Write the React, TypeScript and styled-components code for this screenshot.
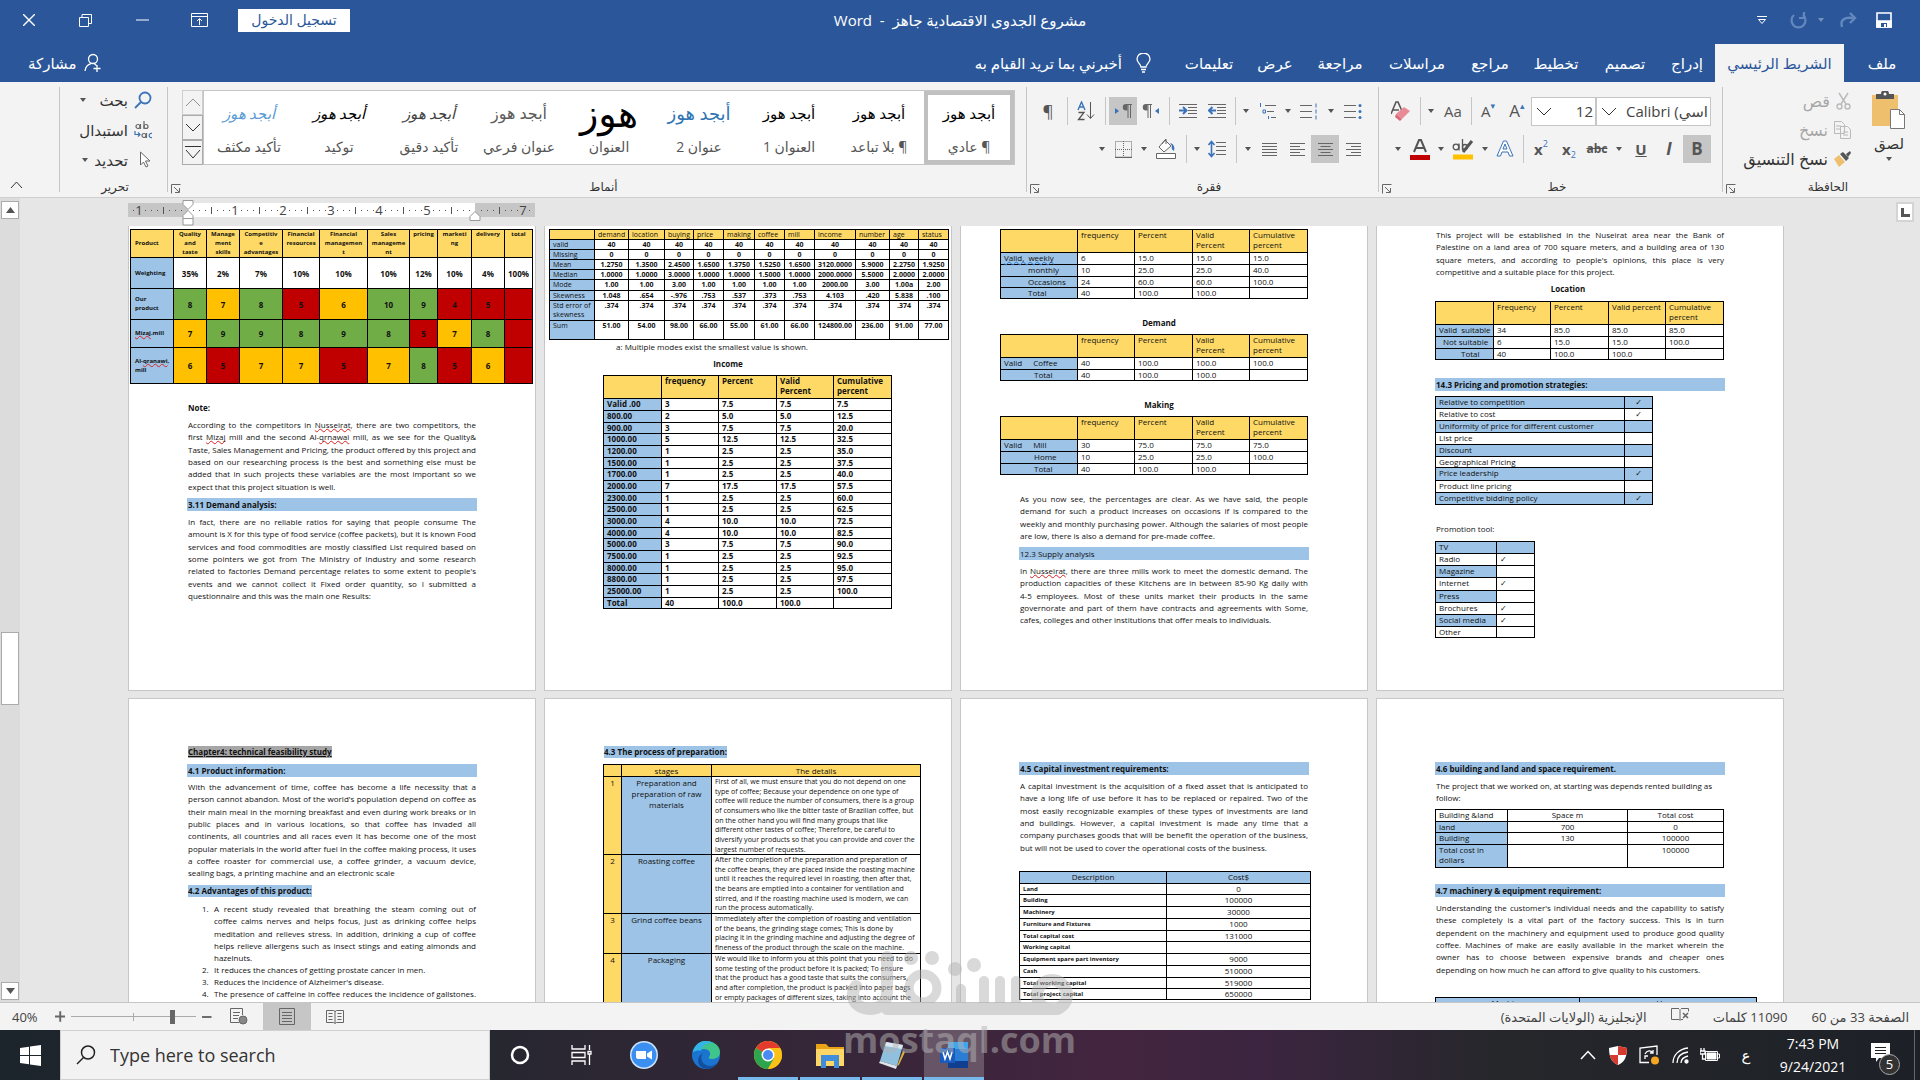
import React, { Fragment, ReactNode } from "react";
import styled, { createGlobalStyle, css } from "styled-components";

const ui = `"Open Sans", "DejaVu Sans", sans-serif`;

const c = {
  brand: "#2b579a",
  ribbon: "#f3f3f3",
  line: "#c6c6c6",
  desk: "#e6e6e6",
  blue: "#9dc3e6",
  gold: "#ffd966",
  amber: "#ffc000",
  green: "#70ad47",
  red: "#c00000",
  grey: "#666666",
  accent: "#3b73b9",
};

const Global = createGlobalStyle`
  * { box-sizing: border-box; }
  body { margin: 0; background: ${c.desk}; font-family: ${ui}; }
  button { border: 0; padding: 0; background: none; font: inherit; color: inherit; cursor: default; }
  a { color: inherit; text-decoration: none; }
`;

const Shell = styled.div`
  position: relative;
  display: flex;
  flex-direction: column;
  height: 100vh;
  overflow: hidden;
`;

/* ---------- title bar and tabs ---------- */

const TitleBar = styled.header`
  display: grid;
  grid-template-columns: 1fr auto 1fr;
  align-items: center;
  flex: none;
  height: 44px;
  padding-bottom: 4px;
  background: ${c.brand};
  color: #fff;
`;

const WindowTools = styled.div`
  display: flex;
  align-items: center;
`;

const WindowButton = styled.button`
  display: grid;
  place-items: center;
  width: 57px;
  height: 32px;
`;

const SignIn = styled.button`
  width: 112px;
  height: 23px;
  margin-left: 10px;
  background: #fff;
  color: ${c.brand};
  font-size: 14px;
  line-height: 20px;
`;

const Title = styled.h1`
  margin: 0;
  font-size: 15px;
  font-weight: 400;
`;

const QuickTools = styled.div`
  display: flex;
  direction: rtl;
  align-items: center;
  padding-right: 22px;
`;

const QuickButton = styled.button<{ $w: number; $dim?: boolean }>`
  display: grid;
  place-items: center;
  width: ${(p) => p.$w}px;
  height: 28px;
  opacity: ${(p) => (p.$dim ? 0.35 : 1)};
`;

const TabBar = styled.nav`
  display: flex;
  direction: rtl;
  flex: none;
  height: 38px;
  background: ${c.brand};
  color: #fff;
  font-size: 15px;
`;

const Tab = styled.a<{ $w: number; $on?: boolean }>`
  display: grid;
  place-items: center;
  width: ${(p) => p.$w}px;
  white-space: nowrap;
  ${(p) => p.$on && css`background: ${c.ribbon}; color: ${c.brand};`}
`;

const TabAction = styled.button<{ $end?: boolean }>`
  display: flex;
  align-items: center;
  gap: 14px;
  margin-right: 22px;
  white-space: nowrap;
  ${(p) => p.$end && css`margin-right: auto; margin-left: 28px; gap: 8px;`}
`;

/* ---------- ribbon ---------- */

const Ribbon = styled.section`
  display: flex;
  direction: rtl;
  flex: none;
  height: 116px;
  background: ${c.ribbon};
  border-bottom: 1px solid #cfcfcf;
  color: #333;
  font-size: 14px;
`;

const Group = styled.div<{ $w: number }>`
  position: relative;
  display: flex;
  flex-direction: column;
  width: ${(p) => p.$w}px;
  padding: 15px 11px 1px 4px;
  &::after {
    content: "";
    position: absolute;
    left: 0;
    top: 5px;
    bottom: 5px;
    border-left: 1px solid ${c.line};
  }
`;

const GroupFoot = styled.div`
  display: flex;
  align-items: center;
  height: 20px;
  margin-top: auto;
  margin-right: -11px;
  font-size: 12px;
`;

const GroupName = styled.span`
  flex: 1;
  text-align: center;
`;

const Launcher = styled.button`
  width: 10px;
  height: 10px;
`;

const ToolRow = styled.div`
  display: flex;
  align-items: center;
  height: 28px;
  margin-bottom: 10px;
  color: #555;
`;

const Tool = styled.button<{ $w?: number; $on?: boolean }>`
  display: grid;
  place-items: center;
  flex: none;
  direction: ltr;
  width: ${(p) => p.$w ?? 28}px;
  height: 28px;
  font-size: 17px;
  line-height: 20px;
  background: ${(p) => (p.$on ? "#c6c6c6" : "transparent")};
`;

const Bar = styled.span<{ $w?: number }>`
  flex: none;
  width: ${(p) => p.$w ?? 8}px;
  height: 28px;
  background: linear-gradient(${c.line}, ${c.line}) center / 1px 100% no-repeat;
`;

const Combo = styled.label<{ $w: number }>`
  display: flex;
  direction: ltr;
  align-items: center;
  flex: none;
  width: ${(p) => p.$w}px;
  height: 29px;
  padding-left: 4px;
  border: 1px solid ${c.line};
  background: #fff;
`;

const ComboSelect = styled.select`
  flex: 1;
  min-width: 0;
  border: 0;
  padding: 0 2px 0 0;
  appearance: none;
  background: none;
  color: #444;
  font: 15px ${ui};
  text-align: right;
  text-align-last: right;
`;

const Sub = styled.small<{ $up?: boolean }>`
  color: ${c.accent};
  font-size: 9px;
  line-height: 9px;
  vertical-align: ${(p) => (p.$up ? "8px" : "-3px")};
`;

const Glyph = styled.span<{ $size?: number; $b?: boolean; $i?: boolean; $deco?: string }>`
  font-size: ${(p) => p.$size ?? 17}px;
  font-weight: ${(p) => (p.$b ? 700 : 400)};
  font-style: ${(p) => (p.$i ? "italic" : "normal")};
  text-decoration: ${(p) => p.$deco ?? "none"};
`;

const Clipboard = styled.div`
  display: flex;
  align-items: flex-start;
  gap: 18px;
  height: 70px;
`;

const Paste = styled.button`
  display: flex;
  flex-direction: column;
  align-items: center;
  gap: 4px;
  width: 40px;
  margin-top: -6px;
  font-size: 15px;
  line-height: 20px;
`;

const ClipList = styled.div`
  display: flex;
  flex-direction: column;
  margin-top: -11px;
`;

const ClipButton = styled.button<{ $dim?: boolean }>`
  display: flex;
  align-items: center;
  gap: 6px;
  height: 29px;
  font-size: 16px;
  line-height: 16px;
  white-space: nowrap;
  opacity: ${(p) => (p.$dim ? 0.4 : 1)};
`;

const GalleryRow = styled.div`
  display: flex;
  margin-top: -7px;
`;

const Gallery = styled.div`
  display: flex;
  height: 75px;
  border: 1px solid ${c.line};
  background: #fff;
`;

const StyleTile = styled.button<{ $on?: boolean }>`
  display: flex;
  flex-direction: column;
  align-items: center;
  justify-content: space-between;
  width: 90px;
  padding: 7px 0 5px;
  border: 4px solid ${(p) => (p.$on ? "#c0c0c0" : "transparent")};
  white-space: nowrap;
  color: #555;
  line-height: 16px;
`;

const Sample = styled.span<{ $color: string; $size: number; $i?: boolean }>`
  height: 24px;
  line-height: 24px;
  color: ${(p) => p.$color};
  font-family: "Liberation Serif", "DejaVu Sans", serif;
  font-size: ${(p) => p.$size}px;
  font-style: ${(p) => (p.$i ? "italic" : "normal")};
`;

const GalleryNav = styled.div`
  display: flex;
  flex-direction: column;
  width: 21px;
  height: 75px;
`;

const NavStep = styled.button`
  display: grid;
  place-items: center;
  flex: 1;
  border: 1px solid #ababab;
  &:first-child { opacity: 0.5; }
`;

const EditButton = styled.button`
  display: flex;
  align-items: center;
  flex: none;
  gap: 6px;
  height: 30px;
  font-size: 15px;
  line-height: 16px;
`;

const EditList = styled.div`
  display: flex;
  flex-direction: column;
  height: 80px;
  margin: -12px 4px 0;
`;

const Collapse = styled.button`
  align-self: flex-end;
  margin: 0 auto 4px 10px;
`;

/* ---------- workspace ---------- */

const Workspace = styled.main`
  display: flex;
  flex: 1;
  min-height: 0;
  overflow: hidden;
`;

const ScrollBar = styled.div`
  display: flex;
  flex-direction: column;
  flex: none;
  width: 20px;
  padding: 3px 1px 2px;
  background: #dcdcdc;
`;

const ScrollButton = styled.button`
  display: grid;
  place-items: center;
  width: 18px;
  height: 18px;
  border: 1px solid #ababab;
  background: #fff;
`;

const ScrollTrack = styled.div`
  flex: 1;
  padding-top: 413px;
`;

const ScrollThumb = styled.div`
  height: 73px;
  border: 1px solid #ababab;
  background: #fff;
`;

const Desk = styled.div`
  flex: 1;
  display: flex;
  flex-direction: column;
  align-items: center;
`;

const RulerRow = styled.div`
  display: flex;
  flex: none;
  width: 1656px;
  height: 28px;
  padding-top: 2px;
`;

const Sheets = styled.div`
  display: grid;
  grid-template-columns: repeat(4, 408px);
  gap: 7px 8px;
`;

const Page = styled.article<{ $first?: boolean }>`
  height: 465px;
  overflow: hidden;
  border: 1px solid ${c.line};
  ${(p) => p.$first && css`border-top: 0;`}
  background: #fff;
  color: #111;
  font: 8px/12px ${ui};
`;

const TabStop = styled.aside`
  flex: none;
  width: 28px;
  padding: 4px 0 0 4px;
`;

const TabBox = styled.button`
  display: grid;
  place-items: center;
  width: 18px;
  height: 20px;
  border: 2px solid #d4d4d4;
  background: #fff;
`;

const Para = styled.p<{ $top: number }>`
  width: 288px;
  margin: ${(p) => p.$top}px 0 0 59px;
`;

const TextLine = styled.span<{ $fill: boolean }>`
  display: block;
  height: 12px;
  line-height: 12px;
  white-space: nowrap;
  text-align: left;
  text-align-last: ${(p) => (p.$fill ? "justify" : "left")};
  &:nth-child(3n) { height: 13px; line-height: 13px; }
`;

const Band = styled.h3<{ $top: number; $light?: boolean }>`
  width: 290px;
  height: 13px;
  margin: ${(p) => p.$top}px 0 0 58px;
  padding-left: 1px;
  background: ${c.blue};
  font-size: 8px;
  line-height: 13px;
  font-weight: ${(p) => (p.$light ? 400 : 700)};
`;

const Tagged = styled.h3<{ $top: number; $bg: string; $under?: boolean }>`
  width: fit-content;
  margin: ${(p) => p.$top}px 0 0 59px;
  background: ${(p) => p.$bg};
  font-size: 8px;
  line-height: 12px;
  text-decoration: ${(p) => (p.$under ? "underline" : "none")};
`;

const Caption = styled.h4<{ $top: number; $left: number; $plain?: boolean }>`
  width: 288px;
  margin: ${(p) => p.$top}px 0 0 ${(p) => p.$left}px;
  font-size: 8px;
  line-height: 12px;
  font-weight: ${(p) => (p.$plain ? 400 : 700)};
  text-align: ${(p) => (p.$plain ? "left" : "center")};
`;

const Points = styled.ol`
  width: 262px;
  margin: 6px 0 0 85px;
  padding: 0;
  list-style: none;
`;

const Point = styled.li`
  display: grid;
  grid-template-columns: 12px 262px;
  margin-left: -12px;
`;

const Spell = styled.span<{ $c?: string }>`
  text-decoration: underline wavy ${(p) => p.$c ?? "#d22"} 1px;
  text-underline-offset: 0;
  text-decoration-skip-ink: none;
`;

const Grid = styled.table<{ $top: number; $left: number; $w: number; $size: number; $lh: number; $bold?: boolean }>`
  width: ${(p) => p.$w}px;
  margin: ${(p) => p.$top}px 0 0 ${(p) => p.$left}px;
  border-collapse: collapse;
  table-layout: fixed;
  font-size: ${(p) => p.$size}px;
  line-height: ${(p) => p.$lh}px;
  font-weight: ${(p) => (p.$bold ? 700 : 400)};
  white-space: nowrap;
`;

const Row = styled.tr<{ $h: number }>`
  height: ${(p) => p.$h}px;
`;

const cell = css<{ $bg?: string; $mid?: boolean; $va?: string; $small?: boolean; $b?: boolean; $pad?: number }>`
  padding: 0 ${(p) => p.$pad ?? 3}px;
  border: 1px solid #000;
  background: ${(p) => p.$bg ?? "#fff"};
  text-align: ${(p) => (p.$mid ? "center" : "left")};
  vertical-align: ${(p) => p.$va ?? "top"};
  ${(p) => p.$small && css`font-size: 6px;`}
  ${(p) => p.$b && css`font-weight: 700;`}
`;
const Cell = styled.td`${cell}`;
const HeadCell = styled.th`
  ${cell}
  font-weight: inherit;
  ${(p) => p.$b && css`font-weight: 700;`}
`;

const Shift = styled.span<{ $x: number }>`
  padding-left: ${(p) => p.$x}px;
`;

const Detail = styled.div`
  font-size: 7px;
`;

const DetailLine = styled.span`
  display: block;
  height: 10px;
  line-height: 10px;
  &:nth-child(3n + 2) { height: 9px; line-height: 9px; }
`;

type Look = { bg?: string; mid?: boolean; va?: string; small?: boolean; b?: boolean; pad?: number };

function Sheet(props: {
  top: number; left: number; cols: number[]; heights: number[]; rows: ReactNode[][];
  size?: number; lh?: number; bold?: boolean; look?: (r: number, k: number) => Look; head?: boolean;
}) {
  const { top, left, cols, heights, rows, size = 8, lh = 10, bold, look, head = true } = props;
  const draw = (row: ReactNode[], r: number) => (
    <Row key={r} $h={heights[r]}>
      {row.map((value, k) => {
        const l = look ? look(r, k) : {};
        const Part = head && r === 0 ? HeadCell : Cell;
        return (
          <Part key={k} $bg={l.bg} $mid={l.mid} $va={l.va} $small={l.small} $b={l.b} $pad={l.pad}>{value}</Part>
        );
      })}
    </Row>
  );
  return (
    <Grid $top={top} $left={left} $w={cols.reduce((a, b) => a + b, 1)} $size={size} $lh={lh} $bold={bold}>
      <colgroup>{cols.map((w, i) => <col key={i} width={w} />)}</colgroup>
      {head && <thead>{draw(rows[0], 0)}</thead>}
      <tbody>{rows.slice(head ? 1 : 0).map((row, i) => draw(row, i + (head ? 1 : 0)))}</tbody>
    </Grid>
  );
}

function Lines({ top, lines }: { top: number; lines: ReactNode[] }) {
  return (
    <Para $top={top}>
      {lines.map((line, i) => <TextLine key={i} $fill={i < lines.length - 1}>{line} </TextLine>)}
    </Para>
  );
}

const surveyLook = (r: number, k: number): Look => ({ bg: r === 0 ? c.gold : k === 0 ? c.blue : undefined });

/* ---------- status bar ---------- */

const StatusBar = styled.footer`
  display: flex;
  align-items: center;
  flex: none;
  height: 28px;
  padding: 0 11px 0 12px;
  border-top: 1px solid ${c.line};
  background: ${c.ribbon};
  color: #444;
  font-size: 13px;
`;

const Zoom = styled.label`
  display: flex;
  align-items: center;
  gap: 4px;
  width: 200px;
  margin-right: 3px;
`;

const ZoomText = styled.span`
  width: 41px;
`;

const Range = styled.input`
  width: 125px;
  height: 16px;
  margin: 0 2px;
  direction: rtl;
  appearance: none;
  background:
    linear-gradient(#aaa, #aaa) center / 1px 8px no-repeat,
    linear-gradient(#aaa, #aaa) center / 100% 1px no-repeat;
  &::-webkit-slider-thumb {
    appearance: none;
    width: 5px;
    height: 14px;
    background: #666;
  }
`;

const ViewButton = styled.button<{ $on?: boolean }>`
  display: grid;
  place-items: center;
  width: 48px;
  height: 27px;
  background: ${(p) => (p.$on ? "#c6c6c6" : "transparent")};
`;

const StatusText = styled.span`
  direction: rtl;
  margin-left: 24px;
  white-space: nowrap;
`;

const StatusEnd = styled.div`
  display: flex;
  align-items: center;
  margin-left: auto;
`;

/* ---------- taskbar ---------- */

const TaskBar = styled.footer`
  display: flex;
  flex: none;
  height: 50px;
  background: linear-gradient(90deg, #1c242c 0, #25272f 24%, #38263a 45%, #43253f 58%, #3b2540 66%, #26272b 78%, #1d2127 100%);
  color: #fff;
`;

const Start = styled.button`
  display: grid;
  place-items: center;
  width: 60px;
`;

const SearchBox = styled.label`
  display: flex;
  align-items: center;
  gap: 14px;
  width: 430px;
  padding-left: 15px;
  border: 1px solid #d0d0d0;
  background: #f2f2f2;
`;

const SearchInput = styled.input`
  flex: 1;
  min-width: 0;
  border: 0;
  padding: 0;
  background: none;
  font: 18px ${ui};
  &::placeholder { color: #333; opacity: 1; }
`;

const Apps = styled.div`
  display: flex;
`;

const AppButton = styled.button<{ $open?: boolean; $on?: boolean }>`
  display: grid;
  place-items: center;
  width: 60px;
  margin-right: 2px;
  background: ${(p) => (p.$on ? "rgba(255,255,255,.22)" : "transparent")};
  ${(p) => p.$open && css`box-shadow: inset 0 -3px #76b9ed;`}
`;

const Tray = styled.div`
  display: flex;
  align-items: center;
  margin-left: auto;
`;

const TrayButton = styled.button<{ $w?: number }>`
  display: grid;
  place-items: center;
  width: ${(p) => p.$w ?? 30}px;
  height: 50px;
  font-size: 15px;
`;

const Clock = styled.time`
  width: 92px;
  text-align: center;
  font-size: 14px;
  line-height: 23px;
`;

const Notice = styled.button`
  position: relative;
  width: 56px;
  height: 50px;
  padding-right: 12px;
  margin-right: 5px;
  border-right: 1px solid #666;
`;

const Count = styled.span`
  position: absolute;
  left: 20px;
  top: 24px;
  width: 21px;
  height: 21px;
  border: 1px solid #aaa;
  border-radius: 50%;
  background: #333;
  font-size: 13px;
  line-height: 19px;
`;

const Watermark = styled.div`
  position: absolute;
  left: 843px;
  bottom: 20px;
  width: 236px;
  opacity: 0.5;
  color: #b4b4b4;
  pointer-events: none;
`;

const WatermarkName = styled.div`
  font: 700 36px/40px "Open Sans", sans-serif;
`;

/* ---------- icons ---------- */

function Icon({ w = 18, h = 18, box, children, stroke = "#666", sw = 1 }: {
  w?: number; h?: number; box?: string; children: ReactNode; stroke?: string; sw?: number;
}) {
  return (
    <svg width={w} height={h} viewBox={box ?? `0 0 ${w} ${h}`} fill="none" stroke={stroke} strokeWidth={sw} aria-hidden="true">
      {children}
    </svg>
  );
}

const Caret = ({ w = 14 }: { w?: number }) => (
  <Tool $w={w} aria-label="▾">
    <Icon w={6} h={4}><path d="M0 0h6L3 4z" fill="#555" stroke="none" /></Icon>
  </Tool>
);

const Chevron = ({ color = "#333", up }: { color?: string; up?: boolean }) => (
  <Icon w={16} h={9} stroke={color}><path d={up ? "M1 8l7-7 7 7" : "M1 1l7 7 7-7"} /></Icon>
);

const Launch = () => (
  <Launcher aria-label="↘">
    <Icon w={10} h={10}><path d="M9.500 .5h-9v9M3 3l5 5M8.500 4v4.500H4" /></Icon>
  </Launcher>
);

const textRows = (widths: number[], side: "l" | "c" | "r", w = 15) =>
  widths.map((n, i) => {
    const x = side === "l" ? 0 : side === "r" ? w - n : (w - n) / 2;
    return <path key={i} d={`M${x} ${i * 3 + 1.5}h${n}`} />;
  });

const AlignIcon = ({ side }: { side: "l" | "c" | "r" | "j" }) => (
  <Icon w={15} h={14}>
    {side === "j" ? textRows([15, 15, 15, 15, 15], "l") : textRows([15, 10, 15, 10, 15], side)}
  </Icon>
);

const ListIcon = ({ kind }: { kind: "dot" | "num" | "multi" }) => (
  <Icon w={18} h={18}>
    {kind !== "multi" && <path d="M0 3.500h12M0 9.500h12M0 15.500h12" />}
    {kind === "dot" && [3.5, 9.5, 15.5].map((y) => <circle key={y} cx={16} cy={y} r={1.5} fill={c.accent} stroke="none" />)}
    {kind === "num" && [3.5, 9.5, 15.5].map((y) => <path key={y} d={`M16 ${y - 2}v4`} stroke={c.accent} />)}
    {kind === "multi" && (
      <>
        <path d="M7 3.500h11M9 9.500h7M13 15.500h5" />
        <path d="M2.500 1v4M5 8h2.500v3H5zM10.500 14v3" stroke={c.accent} />
      </>
    )}
  </Icon>
);

const IndentIcon = ({ flip }: { flip?: boolean }) => (
  <Icon w={18} h={16}>
    <path d="M0 1.500h18M9 4.500h9M9 7.500h9M9 10.500h9M0 14.500h18" />
    <path d={flip ? "M0 7.500h7M4 4l3.500 3.500L4 11" : "M8 7.500H1M4.500 4L1 7.500 4.500 11"} stroke={c.accent} strokeWidth={2} />
  </Icon>
);

const Pilcrow = ({ arrow }: { arrow: "l" | "r" }) => (
  <Icon w={18} h={16}>
    <g transform={arrow === "l" ? "translate(0 0)" : "translate(8 0)"}>
      <path d="M10 1.500H4.500M6 1.500V15M8.500 1.500V15" />
      <path d="M5.500 1H4a3.200 3.200 0 000 6.500h1.500z" fill="#666" stroke="none" />
    </g>
    <path d={arrow === "l" ? "M17 5v6l-4-3z" : "M1 5v6l4-3z"} fill={c.accent} stroke="none" />
  </Icon>
);

const PersonIcon = () => (
  <Icon w={18} h={20} stroke="#fff" sw={1.3}>
    <circle cx="9" cy="6" r="4.500" /><path d="M1 18c.5-4 3-6.500 6-7.300M10.500 11l2 1.500M13 12v7M9.500 15.500h7" />
  </Icon>
);

const DocIcon = () => (
  <Icon w={16} h={17}><path d="M.5 .5h15v16H.5zM3 4.500h10M3 7.500h10M3 10.500h10M3 13.500h10" /></Icon>
);

function Ruler() {
  const marks: ReactNode[] = [];
  for (let i = -9; i <= 57; i++) {
    const x = 60 + i * 6;
    if (x > 405) break;
    if (i % 8 === 0) {
      if (i > 0 && i !== 48) marks.push(<text key={i} x={x} y="12" textAnchor="middle" fontSize="13">{i / 8}</text>);
      if (i === -8) marks.push(<text key={i} x={x} y="12" textAnchor="middle" fontSize="13">1</text>);
    } else if (i % 4 === 0) marks.push(<path key={i} d={`M${x}.5 4v7`} stroke="#555" />);
    else marks.push(<path key={i} d={`M${x}.5 7v1`} stroke="#555" />);
  }
  return (
    <svg width="410" height="26" viewBox="1 -3 410 26" fontFamily='"Open Sans", sans-serif' fill="#444" aria-hidden="true">
      <rect width="408" height="14" fill="#c6c6c6" />
      <rect x="61" width="287" height="14" fill="#fff" />
      {marks}
      <g fill="#fff" stroke="#999">
        <path d="M56 -2.500h10v4l-5 5-5-5zM61 7.500l5 5v9.500h-10v-9.500zM56 15.500h10" />
        <path d="M348 8.500l5 5v4h-10v-4z" />
      </g>
    </svg>
  );
}

/* ---------- content ---------- */

const tabs: [string, number][] = [
  ["إدراج", 56], ["تصميم", 68], ["تخطيط", 70], ["مراجع", 62], ["مراسلات", 84], ["مراجعة", 70], ["عرض", 60], ["تعليمات", 72],
];

const stylesList: { name: string; color: string; size?: number; i?: boolean; text?: string }[] = [
  { name: "¶ عادي", color: "#000" },
  { name: "¶ بلا تباعد", color: "#000" },
  { name: "العنوان 1", color: "#000" },
  { name: "عنوان 2", color: "#2e74b5", size: 18 },
  { name: "العنوان", color: "#000", size: 38, text: "هوز" },
  { name: "عنوان فرعي", color: "#5a5a5a", size: 16 },
  { name: "تأكيد دقيق", color: "#404040", i: true },
  { name: "توكيد", color: "#000", i: true },
  { name: "تأكيد مكثف", color: "#5b9bd5", i: true },
];

const broken = (lines: string[]) => lines.map((l, i) => <Fragment key={i}>{i > 0 && <br />}{l}</Fragment>);

const G = c.green, A = c.amber, R = c.red;
const scores: [ReactNode, string[], string[]][] = [
  [broken(["Our", "product"]), ["8", "7", "8", "5", "6", "10", "9", "4", "5", ""], [G, A, G, R, A, G, G, R, R, R]],
  [<Fragment key="m"><Spell>Mizaj</Spell>.mill</Fragment>, ["7", "9", "9", "8", "9", "8", "5", "7", "8", ""], [A, G, G, G, G, G, R, A, G, R]],
  [<Fragment key="a">Al-<Spell>qranawi</Spell>,<br />mill</Fragment>, ["6", "5", "7", "7", "5", "7", "8", "5", "6", ""], [A, R, A, A, R, A, G, R, A, R]],
];

const stats: ReactNode[][] = [
  ["", "demand", "location", "buying", "price", "making", "coffee", "mill", "income", "number", "age", "status"],
  ["valid", ...Array(11).fill("40")],
  ["Missing", ...Array(11).fill("0")],
  ["Mean", "1.2750", "1.3500", "2.4500", "1.6500", "1.3750", "1.5250", "1.6500", "3120.0000", "5.9000", "2.2750", "1.9250"],
  ["Median", "1.0000", "1.0000", "3.0000", "1.0000", "1.0000", "1.5000", "1.0000", "2000.0000", "5.5000", "2.0000", "2.0000"],
  ["Mode", "1.00", "1.00", "3.00", "1.00", "1.00", "1.00", "1.00", "2000.00", "3.00", "1.00a", "2.00"],
  ["Skewness", "1.048", ".654", "-.976", ".753", ".537", ".373", ".753", "4.103", ".420", "5.838", ".100"],
  [broken(["Std error of", "skewness"]), ...Array(11).fill(".374")],
  ["Sum", "51.00", "54.00", "98.00", "66.00", "55.00", "61.00", "66.00", "124800.00", "236.00", "91.00", "77.00"],
];

const income: ReactNode[][] = [
  ["", "frequency", "Percent", broken(["Valid", "Percent"]), broken(["Cumulative", "percent"])],
  ["Valid .00", "3", "7.5", "7.5", "7.5"],
  ["800.00", "2", "5.0", "5.0", "12.5"],
  ["900.00", "3", "7.5", "7.5", "20.0"],
  ["1000.00", "5", "12.5", "12.5", "32.5"],
  ["1200.00", "1", "2.5", "2.5", "35.0"],
  ["1500.00", "1", "2.5", "2.5", "37.5"],
  ["1700.00", "1", "2.5", "2.5", "40.0"],
  ["2000.00", "7", "17.5", "17.5", "57.5"],
  ["2300.00", "1", "2.5", "2.5", "60.0"],
  ["2500.00", "1", "2.5", "2.5", "62.5"],
  ["3000.00", "4", "10.0", "10.0", "72.5"],
  ["4000.00", "4", "10.0", "10.0", "82.5"],
  ["5000.00", "3", "7.5", "7.5", "90.0"],
  ["7500.00", "1", "2.5", "2.5", "92.5"],
  ["8000.00", "1", "2.5", "2.5", "95.0"],
  ["8800.00", "1", "2.5", "2.5", "97.5"],
  ["25000.00", "1", "2.5", "2.5", "100.0"],
  ["Total", "40", "100.0", "100.0", ""],
];
const incomeHeights = income.map((_, i) => (i === 0 ? 23 : i % 3 === 0 ? 11 : 12));

const surveyHead: ReactNode[] = ["", "frequency", "Percent", broken(["Valid", "Percent"]), broken(["Cumulative", "percent"])];
const surveyCols = [77, 57, 58, 57, 58];
const V = ({ children }: { children: ReactNode }) => <>Valid<Shift $x={11}>{children}</Shift></>;

const pricing: [string, string][] = [
  ["Relative to competition", "✓"], ["Relative to cost", "✓"], ["Uniformity of price for different customer", ""],
  ["List price", ""], ["Discount", ""], ["Geographical Pricing", ""], ["Price leadership", "✓"],
  ["Product line pricing", ""], ["Competitive bidding policy", "✓"],
];
const promo: [string, string][] = [
  ["TV", ""], ["Radio", "✓"], ["Magazine", ""], ["Internet", "✓"], ["Press", ""], ["Brochures", "✓"], ["Social media", "✓"], ["Other", ""],
];
const promoBlue = [0, 2, 4, 6];

const detail = (lines: string[]) => (
  <Detail>{lines.map((l) => <DetailLine key={l}>{l}</DetailLine>)}</Detail>
);

const stages: ReactNode[][] = [
  ["", "stages", "The details"],
  ["1", broken(["Preparation and", "preparation of raw", "materials"]), detail([
    "First of all, we must ensure that you do not depend on one", "type of coffee; Because your dependence on one type of",
    "coffee will reduce the number of consumers, there is a group", "of consumers who like the bitter taste of Brazilian coffee, but",
    "on the other hand you will find many groups that like", "different other tastes of coffee; Therefore, be careful to",
    "diversify your products so that you can provide and cover the", "largest number of requests."])],
  ["2", "Roasting coffee", detail([
    "After the completion of the preparation and preparation of", "the coffee beans, they are placed inside the roasting machine",
    "until it reaches the required level in roasting, then after that,", "the beans are emptied into a container for ventilation and",
    "stirred, and if the roasting machine used is modern, we can", "run the process automatically."])],
  ["3", "Grind coffee beans", detail([
    "Immediately after the completion of roasting and ventilation", "of the beans, the grinding stage comes; This is done by",
    "placing it in the grinding machine and adjusting the degree of", "fineness of the product through the scale on the machine."])],
  ["4", "Packaging", detail([
    "We would like to inform you at this point that you need to do", "some testing of the product before it is packed; To ensure",
    "that the product has a good taste that suits the consumers,", "and after completion, the product is packed into paper bags",
    "or empty packages of different sizes, taking into account the"])],
];

const costs = [
  ["Description", "Cost$"], ["Land", "0"], ["Building", "100000"], ["Machinery", "30000"], ["Furniture and Fixtures", "1000"],
  ["Total capital cost", "131000"], ["Working capital", ""], ["Equipment spare part inventory", "9000"], ["Cash", "510000"],
  ["Total working capital", "519000"], ["Total project capital", "650000"],
];

const Pages = () => (
  <Sheets>
    <Page $first>
      <Sheet top={3} left={1} size={8} lh={9} bold
        cols={[43, 33, 33, 43, 37, 48, 42, 28, 34, 33, 28]} heights={[28, 31, 31, 28, 36]}
        rows={[
          ["Product", broken(["Quality", "and", "taste"]), broken(["Manage", "ment", "skills"]), broken(["Competitiv", "e", "advantages"]),
            broken(["Financial", "resources"]), broken(["Financial", "managemen", "t"]), broken(["Sales", "manageme", "nt"]), "pricing",
            broken(["marketi", "ng"]), "delivery", "total"],
          ["Weighting", "35%", "2%", "7%", "10%", "10%", "10%", "12%", "10%", "4%", "100%"],
          ...scores.map(([n, v]) => [n, ...v]),
        ]}
        look={(r, k) => ({
          bg: r === 0 ? c.gold : k === 0 ? c.blue : r > 1 ? scores[r - 2][2][k - 1] : undefined,
          small: r === 0 || k === 0, mid: k > 0, va: r === 0 && k > 0 ? "top" : "middle", pad: k === 0 ? 4 : 0,
        })} />
      <Caption $top={18} $left={59} $plain><b>Note:</b></Caption>
      <Lines top={5} lines={[
        <>According to the competitors in <Spell>Nusseirat</Spell>, there are two competitors, the</>,
        <>first <Spell>Mizaj</Spell> mill and the second Al-<Spell>qrnawai</Spell> mill, as we see for the Quality&amp;</>,
        "Taste, Sales Management and Pricing, the product offered by this project and",
        "based on our researching process is the best and something else must be",
        "added that in such projects these variables are the most important so we",
        "expect that this project situation is well.",
      ]} />
      <Band $top={5}>3.11 Demand analysis:</Band>
      <Lines top={5} lines={[
        "In fact, there are no reliable ratios for saying that people consume The",
        "amount is X for this type of food service (coffee packets), but it is known Food",
        "services and food commodities are mostly classified List required based on",
        "some pointers we got from The Ministry of Industry and some research",
        "related to factories Demand percentage relates to some extent to people's",
        "events and we cannot collect it Fixed order quantity, so I submitted a",
        "questionnaire and this was the main one Results:",
      ]} />
    </Page>

    <Page $first>
      <Sheet top={3} left={4} size={7} lh={9}
        cols={[45, 34, 36, 29, 30, 31, 30, 30, 41, 34, 29, 30]} heights={[10, 10, 10, 10, 10, 11, 10, 20, 19]} rows={stats}
        look={(r, k) => ({
          bg: r === 0 ? c.gold : k === 0 ? c.blue : undefined, b: r > 0 && k > 0, mid: r > 0 && k > 0, pad: k > 0 && r > 0 ? 0 : 3,
        })} />
      <Caption $top={1} $left={71} $plain>a: Multiple modes exist the smallest value is shown.</Caption>
      <Caption $top={5} $left={39}>Income</Caption>
      <Sheet top={5} left={58} bold cols={[58, 57, 58, 57, 58]} heights={incomeHeights} rows={income} look={surveyLook} />
    </Page>

    <Page $first>
      <Sheet top={3} left={39} cols={surveyCols} heights={[23, 12, 12, 11, 11]} look={surveyLook} rows={[
        surveyHead,
        [<Spell $c="#2a7ad2">Valid,&nbsp; weekly</Spell>, "6", "15.0", "15.0", "15.0"],
        [<Shift $x={24}>monthly</Shift>, "10", "25.0", "25.0", "40.0"],
        [<Shift $x={24}>Occasions</Shift>, "24", "60.0", "60.0", "100.0"],
        [<Shift $x={24}>Total</Shift>, "40", "100.0", "100.0", ""],
      ]} />
      <Caption $top={18} $left={54}>Demand</Caption>
      <Sheet top={5} left={39} cols={surveyCols} heights={[23, 12, 11]} look={surveyLook} rows={[
        surveyHead,
        [<V>Coffee</V>, "40", "100.0", "100.0", "100.0"],
        [<Shift $x={30}>Total</Shift>, "40", "100.0", "100.0", ""],
      ]} />
      <Caption $top={18} $left={54}>Making</Caption>
      <Sheet top={5} left={39} cols={surveyCols} heights={[23, 12, 12, 11]} look={surveyLook} rows={[
        surveyHead,
        [<V>Mill</V>, "30", "75.0", "75.0", "75.0"],
        [<Shift $x={30}>Home</Shift>, "10", "25.0", "25.0", "100.0"],
        [<Shift $x={30}>Total</Shift>, "40", "100.0", "100.0", ""],
      ]} />
      <Lines top={18} lines={[
        "As you now see, the percentages are clear. As we have said, the people",
        "demand for such a product increases on occasions if is compared to the",
        "weekly and monthly purchasing power. Although the salaries of most people",
        "are low, there is also a demand for pre-made coffee.",
      ]} />
      <Band $top={5} $light>12.3 Supply analysis</Band>
      <Lines top={5} lines={[
        <>In <Spell>Nusseirat</Spell>, there are three mills work to meet the domestic demand. The</>,
        "production capacities of these Kitchens are in between 85-90 Kg daily with",
        "4-5 employees. Most of these units market their products in the same",
        "governorate and part of them have contracts and agreements with Some,",
        "cafes, colleges and other institutions that offer meals to individuals.",
      ]} />
    </Page>

    <Page $first>
      <Lines top={3} lines={[
        "This project will be established in the Nuseirat area near the Bank of",
        "Palestine on a land area of 700 square meters, and a building area of 130",
        "square meters, and according to people's opinions, this place is very",
        "competitive and a suitable place for this project.",
      ]} />
      <Caption $top={5} $left={47}>Location</Caption>
      <Sheet top={6} left={58} cols={[58, 57, 58, 57, 58]} heights={[23, 12, 12, 11]} look={surveyLook} rows={[
        ["", "Frequency", "Percent", "Valid percent", broken(["Cumulative", "percent"])],
        [<>Valid<Shift $x={4}>suitable</Shift></>, "34", "85.0", "85.0", "85.0"],
        [<Shift $x={4}>Not suitable</Shift>, "6", "15.0", "15.0", "100.0"],
        [<Shift $x={22}>Total</Shift>, "40", "100.0", "100.0", ""],
      ]} />
      <Band $top={18}>14.3 Pricing and promotion strategies:</Band>
      <Sheet top={5} left={58} head={false} cols={[189, 28]} heights={[12, 12, 12, 12, 12, 11, 13, 12, 12]} rows={pricing}
        look={(r, k) => ({ bg: r % 2 === 0 ? c.blue : undefined, mid: k === 1 })} />
      <Caption $top={18} $left={59} $plain>Promotion tool:</Caption>
      <Sheet top={6} left={58} head={false} cols={[61, 38]} heights={[12, 12, 12, 13, 12, 12, 12, 11]} rows={promo}
        look={(r, k) => ({ bg: promoBlue.includes(r) && (k === 0 || r === 0) ? c.blue : undefined })} />
    </Page>

    <Page>
      <Tagged $top={47} $bg="#a6a6a6" $under>Chapter4: technical feasibility study</Tagged>
      <Band $top={6}>4.1 Product information:</Band>
      <Lines top={4} lines={[
        "With the advancement of time, coffee has become a life necessity that a",
        "person cannot abandon. Most of the world's population depend on coffee as",
        "their main meal in the morning breakfast and even during work breaks or in",
        "public places and in various locations, so that coffee has invaded all",
        "continents, all countries and all races even It has become one of the most",
        "popular materials in the world after fuel In the coffee making process, it uses",
        "a coffee roaster for commercial use, a coffee grinder, a vacuum device,",
        "sealing bags, a printing machine and an electronic scale",
      ]} />
      <Tagged $top={6} $bg={c.blue}>4.2 Advantages of this product:</Tagged>
      <Points>
        <Point>
          <span>1.</span>
          <div>
            <TextLine $fill>A recent study revealed that breathing the steam coming out of</TextLine>
            <TextLine $fill>coffee calms nerves and helps focus, just as drinking coffee helps</TextLine>
            <TextLine $fill>meditation and relieves stress. In addition, drinking a cup of coffee</TextLine>
            <TextLine $fill>helps relieve allergens such as insect stings and eating almonds and</TextLine>
            <TextLine $fill={false}>hazelnuts.</TextLine>
          </div>
        </Point>
        <Point><span>2.</span><span>It reduces the chances of getting prostate cancer in men.</span></Point>
        <Point><span>3.</span><span>Reduces the incidence of Alzheimer's disease.</span></Point>
        <Point><span>4.</span><TextLine $fill>The presence of caffeine in coffee reduces the incidence of gallstones.</TextLine></Point>
      </Points>
    </Page>

    <Page>
      <Tagged $top={47} $bg={c.blue}>4.3 The process of preparation:</Tagged>
      <Sheet top={6} left={58} cols={[18, 90, 209]} heights={[12, 78, 59, 40, 100]} lh={11} rows={stages}
        look={(r, k) => ({ bg: r === 0 || k === 0 ? c.gold : k === 1 ? c.blue : undefined, mid: r === 0 || k < 2 })} />
    </Page>

    <Page>
      <Band $top={63}>4.5 Capital investment requirements:</Band>
      <Lines top={5} lines={[
        "A capital investment is the acquisition of a fixed asset that is anticipated to",
        "have a long life of use before it has to be replaced or repaired. Two of the",
        "most easily recognizable examples of these types of investments are land",
        "and buildings. However, a capital investment is made any time that a",
        "company purchases goods that will be benefit the operation of the business,",
        "but will not be used to cover the operational costs of the business.",
      ]} />
      <Sheet top={17} left={58} cols={[147, 144]} heights={[12, 11, 12, 12, 12, 11, 12, 12, 12, 11, 11]} rows={costs}
        look={(r, k) => ({ bg: r === 0 ? c.blue : undefined, mid: r === 0 || k === 1, small: r > 0 && k === 0, b: r > 0 && k === 0 })} />
    </Page>

    <Page>
      <Band $top={63}>4.6 building and land and space requirement.</Band>
      <Para $top={5}>
        <TextLine $fill={false}>The project that we worked on, at starting was depends rented building as</TextLine>
        <TextLine $fill={false}>follow:</TextLine>
      </Para>
      <Sheet top={5} left={58} cols={[72, 120, 96]} heights={[12, 11, 12, 23]} rows={[
        ["Building &land", "Space m", "Total cost"], ["land", "700", "0"], ["Building", "130", "100000"],
        [broken(["Total cost in", "dollars"]), "", "100000"],
      ]} look={(r, k) => ({ bg: r > 0 && k === 0 ? c.blue : undefined, mid: k > 0 })} />
      <Band $top={16}>4.7 machinery &amp; equipment requirement:</Band>
      <Lines top={5} lines={[
        "Understanding the customer's individual needs and the capability to satisfy",
        "these completely is a vital part of the factory success. This is in turn",
        "dependent on the machinery and equipment used to produce good quality",
        "coffee. Machines of make are easily available in the market wherein the",
        "owner has to choose between expensive brands and cheaper ones",
        "depending on how much he can afford to give quality to his customers.",
      ]} />
      <Sheet top={21} left={58} cols={[144, 177]} heights={[12]} rows={[["Machine", "Usage"]]} look={() => ({ bg: c.blue, mid: true })} />
    </Page>
  </Sheets>
);

export default function App() {
  return (
    <Shell>
      <Global />
      <TitleBar>
        <WindowTools>
          <WindowButton aria-label="✕"><Icon w={12} h={12} stroke="#fff" sw={1.4}><path d="M0 0l12 12M12 0L0 12" /></Icon></WindowButton>
          <WindowButton aria-label="❐"><Icon w={13} h={13} stroke="#fff"><path d="M.5 3.500h9v9h-9zM3 3V.5h9.500v9H10" /></Icon></WindowButton>
          <WindowButton aria-label="–"><Icon w={13} h={2} stroke="#fff"><path d="M0 1h13" /></Icon></WindowButton>
          <WindowButton aria-label="⬆"><Icon w={17} h={14} stroke="#fff"><path d="M.5 .5h16v13H.5zM.5 3.500h16M8.500 12V6M6 8l2.500-2.500L11 8" /></Icon></WindowButton>
          <SignIn>تسجيل الدخول</SignIn>
        </WindowTools>
        <Title dir="rtl">مشروع الجدوى الاقتصادية جاهز &nbsp;-&nbsp; Word</Title>
        <QuickTools>
          <QuickButton $w={28} aria-label="💾">
            <Icon w={16} h={16} stroke="#fff" sw={1.6}><path d="M1 1h14v14H1z" /><path d="M1 9h14v6H1z" fill="#fff" /><path d="M5 11h6v4H5z" fill={c.brand} stroke="none" /><path d="M8 12h2v3H8z" fill="#fff" stroke="none" /></Icon>
          </QuickButton>
          <QuickButton $w={44} $dim aria-label="↷">
            <Icon w={18} h={16} stroke="#cfe0ff" sw={2.4}><path d="M3 15C1 8 5 5 14 6" /><path d="M11 1l5 5-5 5" /></Icon>
          </QuickButton>
          <QuickButton $w={10} $dim aria-label="▾"><Icon w={6} h={4}><path d="M0 0h6L3 4z" fill="#fff" stroke="none" /></Icon></QuickButton>
          <QuickButton $w={36} $dim aria-label="↺">
            <Icon w={17} h={18} stroke="#cfe0ff" sw={2.2}><path d="M13 4a7 7 0 11-9 0" /><path d="M9 7h5V1" /></Icon>
          </QuickButton>
          <QuickButton $w={36} aria-label="▽"><Icon w={10} h={9} stroke="#fff"><path d="M0 .5h10M1.500 3.500h7L5 7.500z" /></Icon></QuickButton>
        </QuickTools>
      </TitleBar>

      <TabBar>
        <Tab href="#" $w={76}>ملف</Tab>
        <Tab href="#" $w={129} $on>الشريط الرئيسي</Tab>
        {tabs.map(([name, w]) => <Tab href="#" key={name} $w={w}>{name}</Tab>)}
        <TabAction>
          <Icon w={15} h={20} stroke="#fff" sw={1.3}><path d="M5 14c0-3-4-4-4-8a6.500 6 0 0113 0c0 4-4 5-4 8zM5 16.500h5M6 19h3" /></Icon>
          أخبرني بما تريد القيام به
        </TabAction>
        <TabAction $end><PersonIcon />مشاركة</TabAction>
      </TabBar>

      <Ribbon>
        <Group $w={198}>
          <Clipboard>
            <Paste>
              <Icon w={34} h={38} stroke="none">
                <path d="M0 4h26v31H0z" fill="#eec06e" /><path d="M4 3h5a4 4 0 018 0h5v5H4z" fill="#555" /><circle cx="13" cy="3" r="1.500" fill="#fff" />
                <path d="M18.500 18.500h9l5 5v14h-14z" fill="#fff" stroke="#777" /><path d="M27.500 18.500v5h5" stroke="#777" />
              </Icon>
              لصق
              <Icon w={6} h={4}><path d="M0 0h6L3 4z" fill="#555" stroke="none" /></Icon>
            </Paste>
            <ClipList>
              <ClipButton $dim><Icon w={15} h={18} sw={1.4}><path d="M3 1l7 11M12 1L5 12" /><circle cx="3.500" cy="14.500" r="2.500" /><circle cx="11.500" cy="14.500" r="2.500" /></Icon>قص</ClipButton>
              <ClipButton $dim><Icon w={17} h={18}><path d="M.5 .5h7l3 3v9h-10zM6.500 5.500h7l3 3v9h-10zM2 5h5M2 8h4M9 11h5M9 14h5" /></Icon>نسخ</ClipButton>
              <ClipButton><Icon w={17} h={16} stroke="none"><path d="M0 8l5-4 6 7-6 5z" fill="#eec06e" /><path d="M6 3l3-2 6 6-3 3zM12 3l4-3 1 2-3 4z" fill="#555" /></Icon>نسخ التنسيق</ClipButton>
            </ClipList>
          </Clipboard>
          <GroupFoot><GroupName>الحافظة</GroupName><Launch /></GroupFoot>
        </Group>

        <Group $w={344}>
          <ToolRow>
            <Combo $w={115}><Chevron /><ComboSelect aria-label="خط" defaultValue="a"><option value="a">Calibri (اسي</option></ComboSelect></Combo>
            <Combo $w={65}><Chevron /><ComboSelect aria-label="حجم" defaultValue="12"><option>12</option></ComboSelect></Combo>
            <Tool><span><Glyph>A</Glyph><Sub $up>▴</Sub></span></Tool>
            <Tool $w={30}><span><Glyph $size={15}>A</Glyph><Sub $up>▾</Sub></span></Tool>
            <Bar $w={4} />
            <Tool $w={32}><Glyph $size={15}>Aa</Glyph></Tool>
            <Caret w={12} />
            <Bar $w={10} />
            <Tool aria-label="⌫"><Icon w={20} h={20} stroke="none"><path d="M0 13L5 1h2l4 9M2 9h6" stroke="#555" strokeWidth="1.600" /><path d="M5 13l8-7 6 4-8 8z" fill="#e98b96" /><path d="M5 13l6 5-2 2-5-4z" fill="#d96a78" /></Icon></Tool>
          </ToolRow>
          <ToolRow>
            <Tool $on><Glyph $b>B</Glyph></Tool>
            <Tool><Glyph $i $b>I</Glyph></Tool>
            <Tool><Glyph $b $deco="underline" $size={15}>U</Glyph></Tool>
            <Caret w={16} />
            <Tool><Glyph $b $deco="line-through" $size={12}>abc</Glyph></Tool>
            <Tool><span><Glyph $b $size={15}>x</Glyph><Sub>2</Sub></span></Tool>
            <Tool><span><Glyph $b $size={15}>x</Glyph><Sub $up>2</Sub></span></Tool>
            <Bar />
            <Tool aria-label="A"><Icon w={20} h={20} stroke={c.accent}><path d="M2 17L8.500 2h3L18 17h-3.500L13 13H7l-1.500 4zM8 10h4l-2-5z" fill="#fff" /></Icon></Tool>
            <Caret w={12} />
            <Tool $w={32} aria-label="ab"><Icon w={22} h={22} stroke="#555" sw={1.3}><path d="M1 16.500h20v5H1z" fill={A} stroke="none" /><circle cx="4" cy="9" r="2.800" /><path d="M7 5.500v7M10.500 1v11" /><circle cx="13" cy="9" r="2.500" /><path d="M20 3l-9 11" strokeWidth="3" /></Icon></Tool>
            <Caret w={12} />
            <Tool $w={30} aria-label="A"><Icon w={20} h={22} stroke="#555" sw={2}><path d="M0 17h20v5H0z" fill={R} stroke="none" /><path d="M4 14L9 2h2l5 12M6 10h8" /></Icon></Tool>
            <Caret />
          </ToolRow>
          <GroupFoot><GroupName>خط</GroupName><Launch /></GroupFoot>
        </Group>

        <Group $w={352}>
          <ToolRow>
            <Tool aria-label="•"><ListIcon kind="dot" /></Tool><Caret w={16} />
            <Tool aria-label="1"><ListIcon kind="num" /></Tool><Caret />
            <Tool aria-label="a"><ListIcon kind="multi" /></Tool><Caret />
            <Bar />
            <Tool aria-label="⇤"><IndentIcon /></Tool>
            <Tool $w={30} aria-label="⇥"><IndentIcon flip /></Tool>
            <Bar />
            <Tool aria-label="¶◂"><Pilcrow arrow="l" /></Tool>
            <Tool $on aria-label="▸¶"><Pilcrow arrow="r" /></Tool>
            <Bar />
            <Tool $w={30} aria-label="AZ"><Icon w={18} h={20} stroke="#555"><path d="M1 9l3.500-8L8 9M2 6h5" stroke={c.accent} strokeWidth="1.400" /><path d="M1.500 11.500H7l-5.500 7H7.500" strokeWidth="1.300" /><path d="M13.500 1v16M10 13.500l3.500 4 3.500-4" /></Icon></Tool>
            <Bar />
            <Tool $w={30}><Glyph>¶</Glyph></Tool>
          </ToolRow>
          <ToolRow>
            <Tool aria-label="right"><AlignIcon side="r" /></Tool>
            <Tool $on aria-label="center"><AlignIcon side="c" /></Tool>
            <Tool aria-label="left"><AlignIcon side="l" /></Tool>
            <Tool aria-label="justify"><AlignIcon side="j" /></Tool><Caret />
            <Bar $w={10} />
            <Tool aria-label="↕"><Icon w={18} h={18}><path d="M8 2.500h10M8 6.500h10M8 10.500h10M8 14.500h10" /><path d="M3.500 2v14M.5 5l3-3.500 3 3.500M.5 13l3 3.500 3-3.500" stroke={c.accent} strokeWidth="1.600" /></Icon></Tool>
            <Caret w={12} />
            <Bar $w={10} />
            <Tool $w={30} aria-label="◇"><Icon w={20} h={20}><path d="M.5 14.500h19v5H.5z" fill="#fff" /><path d="M9 1l6 6-7 6-5-5z" fill="#fff" /><path d="M6 5L10 0v5" /><path d="M14 4c4 1 5 4 4 8-2-1-3-3-2-5z" fill={c.accent} stroke="none" /></Icon></Tool>
            <Caret />
            <Tool aria-label="▦"><Icon w={17} h={17}><path d="M.5 .5h16v16H.5zM8.500 0v17M0 8.500h17" strokeDasharray="1 1" /><path d="M0 16.500h17" strokeWidth="1.500" /></Icon></Tool>
            <Caret />
          </ToolRow>
          <GroupFoot><GroupName>فقرة</GroupName><Launch /></GroupFoot>
        </Group>

        <Group $w={859}>
          <GalleryRow>
            <Gallery>
              {stylesList.map((s, i) => (
                <StyleTile key={s.name} $on={i === 0}>
                  <Sample $color={s.color} $size={s.size ?? 15} $i={s.i}>{s.text ?? "أبجد هوز"}</Sample>
                  {s.name}
                </StyleTile>
              ))}
            </Gallery>
            <GalleryNav>
              <NavStep aria-label="▴"><Chevron up /></NavStep>
              <NavStep aria-label="▾"><Chevron /></NavStep>
              <NavStep aria-label="▿"><Icon w={16} h={15} stroke="#333"><path d="M0 1.500h16M1 5l7 8 7-8" /></Icon></NavStep>
            </GalleryNav>
          </GalleryRow>
          <GroupFoot><GroupName>أنماط</GroupName><Launch /></GroupFoot>
        </Group>

        <Group $w={108}>
          <EditList>
            <EditButton><Icon w={18} h={18} stroke={c.accent} sw={1.8}><circle cx="11" cy="7" r="5.500" /><path d="M7 11l-6 6" /></Icon>بحث&nbsp;&nbsp;<Icon w={6} h={4}><path d="M0 0h6L3 4z" fill="#555" stroke="none" /></Icon></EditButton>
            <EditButton><Icon w={18} h={18} sw={1.200}><circle cx="4" cy="5.500" r="2" /><path d="M6.500 3v5M10 0v8" /><circle cx="12" cy="5.500" r="2" /><path d="M1 10v3.500h5M4 11.500l2 2-2 2" stroke={c.accent} /><circle cx="10" cy="14.500" r="2" /><path d="M12.500 12v5" /><path d="M18 12.500a2 2.200 0 100 4" stroke={c.accent} /></Icon>استبدال</EditButton>
            <EditButton><Icon w={18} h={18}><path d="M6.500 1v13l3-3 2.500 5 2-1-2.500-5H16z" fill="#fff" /></Icon>تحديد<Icon w={6} h={4}><path d="M0 0h6L3 4z" fill="#555" stroke="none" /></Icon></EditButton>
          </EditList>
          <GroupFoot><GroupName>تحرير</GroupName></GroupFoot>
        </Group>
        <Collapse aria-label="^"><Icon w={13} h={8} stroke="#333"><path d="M1 7l5.500-6L12 7" /></Icon></Collapse>
      </Ribbon>

      <Workspace>
        <ScrollBar>
          <ScrollButton aria-label="▲"><Icon w={9} h={6}><path d="M0 6h9L4.500 0z" fill="#555" stroke="none" /></Icon></ScrollButton>
          <ScrollTrack><ScrollThumb /></ScrollTrack>
          <ScrollButton aria-label="▼"><Icon w={9} h={6}><path d="M0 0h9L4.500 6z" fill="#555" stroke="none" /></Icon></ScrollButton>
        </ScrollBar>
        <Desk>
          <RulerRow><Ruler /></RulerRow>
          <Pages />
        </Desk>
        <TabStop><TabBox aria-label="L"><Icon w={9} h={9} stroke="#555" sw={3}><path d="M1.500 0v7.500H9" /></Icon></TabBox></TabStop>
      </Workspace>

      <StatusBar>
        <Zoom>
          <ZoomText>40%</ZoomText>
          <Icon w={11} h={11} sw={2}><path d="M0 5.500h11M5.500 0v11" /></Icon>
          <Range type="range" min={0} max={100} defaultValue={18} aria-label="40%" />
          <Icon w={10} h={2} sw={2}><path d="M0 1h10" /></Icon>
        </Zoom>
        <ViewButton aria-label="web"><Icon w={18} h={17}><path d="M12.500 7V.5H.5v14H9M3 4.500h7M3 7.500h6M3 10.500h5" /><circle cx="13" cy="12" r="4" fill="#888" /></Icon></ViewButton>
        <ViewButton $on aria-label="print"><DocIcon /></ViewButton>
        <ViewButton aria-label="read"><Icon w={18} h={16}><path d="M.5 1.500h7l1.500 1 1.500-1h7v12h-7l-1.500 1-1.500-1h-7zM9 2v12M2.500 4.500h4M2.500 7.500h4M2.500 10.500h4M11.500 4.500h4M11.500 7.500h4M11.500 10.500h4" /></Icon></ViewButton>
        <StatusEnd>
          <StatusText>الإنجليزية (الولايات المتحدة)</StatusText>
          <StatusText><Icon w={18} h={15}><path d="M8 1.500H.5v11H8l1 1 1-1h2M9 2v11M10 1.500h7.500v3" /><path d="M12 6l5 5M17 6l-5 5" strokeWidth="1.600" /></Icon></StatusText>
          <StatusText>11090 كلمات</StatusText>
          <StatusText>الصفحة 33 من 60</StatusText>
        </StatusEnd>
      </StatusBar>

      <TaskBar>
        <Start aria-label="Start"><Icon w={21} h={21} stroke="none"><path d="M0 3l9-1.300V10H0zM10 1.500L21 0v10H10zM0 11h9v8.300L0 18zM10 11h11v10l-11-1.500z" fill="#fff" /></Icon></Start>
        <SearchBox>
          <Icon w={20} h={20} stroke="#222" sw={1.5}><circle cx="12" cy="7.500" r="6.500" /><path d="M7.500 12.500L1 19" /></Icon>
          <SearchInput placeholder="Type here to search" aria-label="Type here to search" />
        </SearchBox>
        <Apps>
          <AppButton aria-label="Cortana"><Icon w={20} h={20} stroke="#fff" sw={2.5}><circle cx="10" cy="10" r="8" /></Icon></AppButton>
          <AppButton aria-label="Task View"><Icon w={22} h={20} stroke="#fff" sw={1.300}><path d="M1 0v4h13V0M1 20v-4h13v4M1 7.500h13v5H1zM18.500 0v5M18.500 9v11M17 6.500h3v2.500h-3z" /></Icon></AppButton>
          <AppButton aria-label="Zoom"><Icon w={28} h={28} stroke="none"><circle cx="14" cy="14" r="14" fill="#cfe6ff" /><circle cx="14" cy="14" r="12.500" fill="#3b8ff0" /><path d="M6 10h10v8H8a2 2 0 01-2-2zM17 12.500l5-3v9l-5-3z" fill="#fff" /></Icon></AppButton>
          <AppButton aria-label="Edge"><Icon w={30} h={30} stroke="none"><circle cx="15" cy="15" r="14" fill="#1b74d0" /><path d="M2 12C4 4 10 1 15 1c8 0 14 5 14 11 0 5-4 7-8 7-3 0-4-1-3-2 3-4 0-8-5-8C8 9 4 10 2 12z" fill="#3fc58c" /><path d="M2 12C4 4 10 1 15 1c3 0 6 1 8 2-7-1-12 3-13 8-3-1-6 0-8 1z" fill="#35b5e5" /><path d="M12 13c-4 4-1 13 7 13 3 0 5-1 7-3-3 5-9 7-14 5-7-3-6-12 0-15z" fill="#124f9c" /></Icon></AppButton>
          <AppButton $open aria-label="Chrome"><Icon w={28} h={28} stroke="none"><circle cx="14" cy="14" r="14" fill="#fbc116" /><path d="M14 14L1.900 7A14 14 0 0126.100 7z" fill="#e33b2e" /><path d="M14 14L1.900 7A14 14 0 0014 28l6-10.500z" fill="#2da44e" /><path d="M14 7h12.100A14 14 0 0114 28l6-10.500z" fill="#fbc116" /><circle cx="14" cy="14" r="6.500" fill="#fff" /><circle cx="14" cy="14" r="5" fill="#4a8af4" /></Icon></AppButton>
          <AppButton $open aria-label="Explorer"><Icon w={28} h={26} stroke="none"><path d="M0 2h10l3 3h15v19H0z" fill="#e8a317" /><path d="M0 7h28v17H0z" fill="#ffd767" /><path d="M5 13h18v13h-5v-7h-8v7H5z" fill="#3f8ddb" /></Icon></AppButton>
          <AppButton $open aria-label="Notes"><Icon w={28} h={28} stroke="none"><path d="M8 1l17 3-6 21L2 20z" fill="#8fc0dd" /><path d="M8 1l17 3-1 4L7 5z" fill="#dbe8ef" /><path d="M2 20l17 5-1 3L1 22z" fill="#dfe6ea" /><path d="M25 10l2 1-6 13-2 1z" fill="#d9b13b" /></Icon></AppButton>
          <AppButton $open $on aria-label="Word"><Icon w={28} h={28} stroke="none"><path d="M8 1h20v26H8z" fill="#2b7cd3" /><path d="M8 1h20v7H8z" fill="#41a5ee" /><path d="M8 20h20v7H8z" fill="#103f91" /><path d="M0 7h15v15H0z" fill="#185abd" /><path d="M3 11l2 7 2.500-7 2.500 7 2-7" stroke="#fff" strokeWidth="1.500" /></Icon></AppButton>
        </Apps>
        <Tray>
          <TrayButton aria-label="^"><Icon w={16} h={10} stroke="#fff" sw={1.5}><path d="M1 9l7-7.500L15 9" /></Icon></TrayButton>
          <TrayButton aria-label="Shield"><Icon w={18} h={19} stroke="none"><path d="M9 0l9 2c0 8-2 14-9 17C2 16 0 10 0 2z" fill="#fff" /><path d="M9 0l9 2-.5 7H9zM9 9v10C4 17 2 13 .5 9z" fill="#d63a2f" /></Icon></TrayButton>
          <TrayButton $w={32} aria-label="Update"><Icon w={20} h={20} stroke="#fff" sw={1.300}><path d="M10 17.500H1V3l17-2v9M6 9c2-4 6-4 8-1M14 5v3h-3M6 14v-3h3" /><circle cx="16" cy="15.500" r="4" fill="#f5a623" stroke="none" /></Icon></TrayButton>
          <TrayButton aria-label="Wi-Fi"><Icon w={17} h={17} stroke="#fff" sw={1.300}><path d="M1 16C1 8 7 2 16 1M5 16c0-6 4-10 11-11M9 16c0-4 3-6 7-7" /><circle cx="14.500" cy="14.500" r="1.500" fill="#fff" /></Icon></TrayButton>
          <TrayButton aria-label="Battery"><Icon w={20} h={14} stroke="#fff"><path d="M5.500 3.500h12v9h-12zM18 6h1.500v4H18" /><path d="M7 5h9v6H7z" fill="#fff" /><path d="M1 0v3M4 0v3M0 3h5v3H0zM2.500 6v5H5" strokeWidth="1.300" /></Icon></TrayButton>
          <TrayButton $w={42}>ع</TrayButton>
          <Clock>7:43 PM<br />9/24/2021</Clock>
          <Notice aria-label="5">
            <Icon w={20} h={20} stroke="none"><path d="M0 0h19v15H8l-3 4v-4H0z" fill="#fff" /><path d="M4 4.500h11M4 7.500h11M4 10.500h11" stroke="#222" /></Icon>
            <Count>5</Count>
          </Notice>
        </Tray>
      </TaskBar>

      <Watermark aria-hidden="true">
        <svg width="236" height="66" viewBox="-2 0 236 66" fill="none" stroke="#b4b4b4" strokeWidth="12" strokeLinecap="round" strokeLinejoin="round">
          <path d="M42 8v34c0 12-7 18-17 18S8 54 8 46c0-4 1-7 3-9M42 60h165" />
          <path d="M116 40v16M139 32v24M155 32v24M171 32v24" strokeWidth="10" />
          <circle cx="78" cy="39" r="14" strokeWidth="9" />
          <circle cx="207" cy="46" r="15" />
          <g fill="#b4b4b4" stroke="none"><circle cx="66" cy="9" r="7" /><circle cx="87" cy="9" r="7" /><circle cx="110" cy="20" r="7" /><circle cx="129" cy="16" r="7" /></g>
        </svg>
        <WatermarkName>mostaql.com</WatermarkName>
      </Watermark>
    </Shell>
  );
}
